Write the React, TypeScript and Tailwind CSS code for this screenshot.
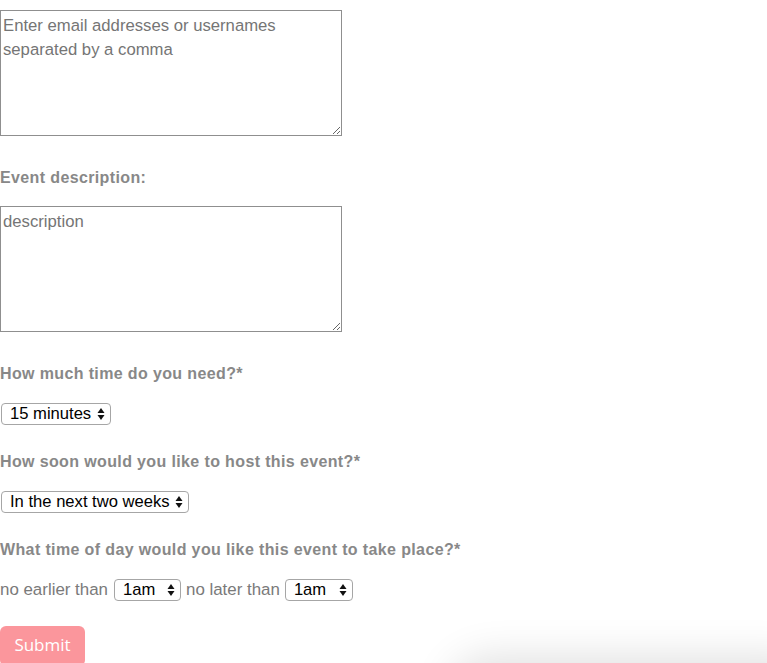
import React from "react";

function Arrows() {
  return (
    <svg width="8" height="13" viewBox="0 0 8 13" className="pointer-events-none absolute right-[6px] top-1/2 -translate-y-1/2">
      <path d="M4 0.5 L7.5 5.5 L0.5 5.5 Z" fill="#111" />
      <path d="M4 12.5 L7.5 7.5 L0.5 7.5 Z" fill="#111" />
    </svg>
  );
}

function Select({ value, width }: { value: string; width: string }) {
  return (
    <span className={`relative inline-block h-[22px] ${width}`}>
      <select
        defaultValue={value}
        className="block h-[22px] w-full appearance-none rounded-[4px] border border-[#a6a6a6] bg-white pl-[8px] pr-[18px] text-[16.6px] leading-[20px] text-black outline-none"
        style={{ fontFamily: '"Liberation Sans", Arial, sans-serif' }}
      >
        <option>{value}</option>
      </select>
      <Arrows />
    </span>
  );
}

const label =
  "block h-[20px] text-[16px] font-bold leading-[20px] tracking-[0.37px] text-[#888888]";

export default function App() {
  return (
    <div
      className="relative h-[663px] w-[767px] overflow-hidden bg-white"
      style={{ fontFamily: '"Liberation Sans", Arial, sans-serif' }}
    >
      <div className="pt-[10px]">
        <textarea
          className="block h-[126px] w-[342px] resize-y border border-[#8f8f8f] px-[2px] pt-[3px] text-[16.7px] leading-[24px] text-[#333] outline-none placeholder:text-[#757575]"
          placeholder="Enter email addresses or usernames separated by a comma"
        />
        <label className={`${label} mt-[32px]`}>Event description:</label>
        <textarea
          className="mt-[18px] block h-[126px] w-[342px] resize-y border border-[#8f8f8f] px-[2px] pt-[3px] text-[16.7px] leading-[24px] text-[#333] outline-none placeholder:text-[#757575]"
          placeholder="description"
        />
        <label className={`${label} mt-[32px]`}>How much time do you need?*</label>
        <div className="mt-[19px] flex h-[22px] pl-[1px]">
          <Select value="15 minutes" width="w-[110px]" />
        </div>
        <label className={`${label} mt-[27px]`}>How soon would you like to host this event?*</label>
        <div className="mt-[19px] flex h-[22px] pl-[1px]">
          <Select value="In the next two weeks" width="w-[188px]" />
        </div>
        <label className={`${label} mt-[27px]`}>
          What time of day would you like this event to take place?*
        </label>
        <div className="mt-[19px] flex h-[22px] items-center text-[16.9px] text-[#7a7a7a]">
          <span>no earlier than</span>
          <span className="ml-[6px] flex">
            <Select value="1am" width="w-[67px]" />
          </span>
          <span className="ml-[5px]">no later than</span>
          <span className="ml-[5px] flex">
            <Select value="1am" width="w-[68px]" />
          </span>
        </div>
        <button
          className="mt-[25px] block h-[40px] w-[85px] rounded-[6px] bg-[#fb969c] pb-[2px] text-[17px] font-medium text-white"
          style={{ fontFamily: '"Open Sans", sans-serif' }}
        >
          Submit
        </button>
      </div>
      <div className="absolute left-[460px] right-[-40px] top-[668px] h-[60px] rounded-[30px] shadow-[0_0_40px_12px_rgba(0,0,0,0.12)]" />
    </div>
  );
}
